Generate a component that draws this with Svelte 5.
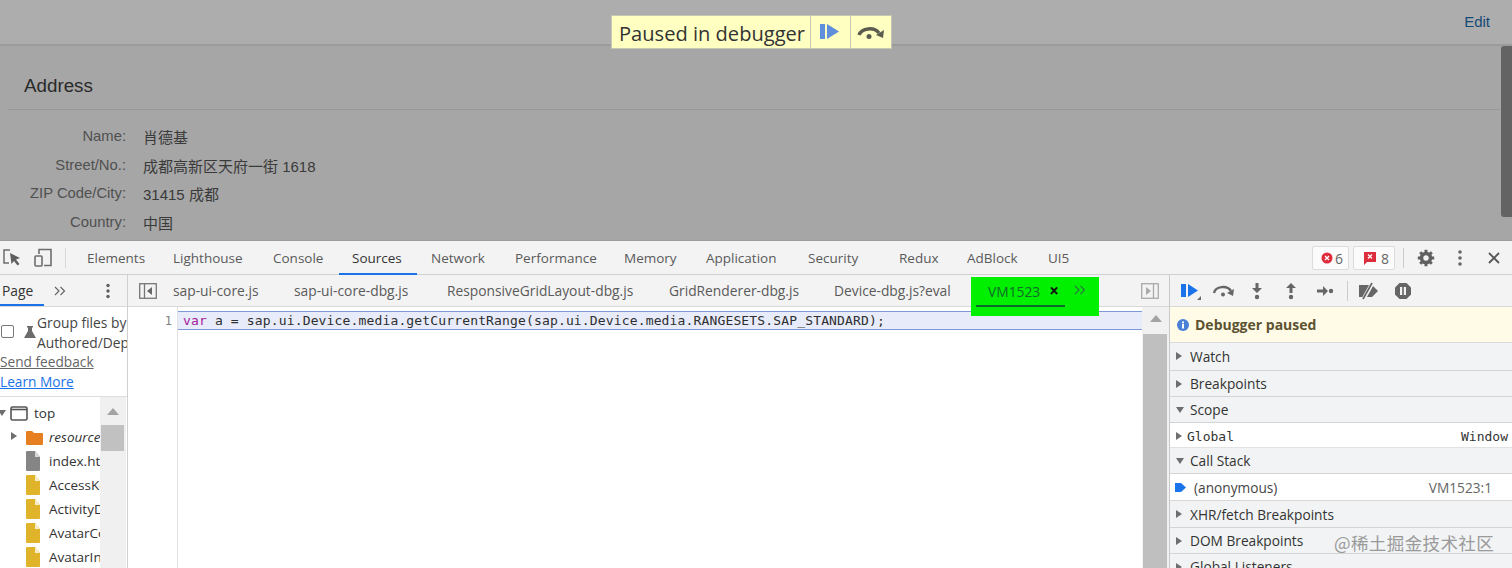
<script>
  const mainTabs = ['Elements','Lighthouse','Console','Sources','Network','Performance','Memory','Application','Security','Redux','AdBlock','UI5'];
  const fileTabs = ['sap-ui-core.js','sap-ui-core-dbg.js','ResponsiveGridLayout-dbg.js','GridRenderer-dbg.js','Device-dbg.js?eval'];
  const rows = [['Name:','肖德基'],['Street/No.:','成都高新区天府一街 1618'],['ZIP Code/City:','31415 成都'],['Country:','中国']];
  const files = [['AccessK'],['ActivityD'],['AvatarC'],['AvatarIn']];
</script>

<div class="root">
  <section class="page">
    <header class="pagehead">
      <div class="overlay">
        <span class="ovmsg">Paused in debugger</span>
        <span class="ovbtn"><svg width="24" height="20" viewBox="0 0 24 20"><rect x="2" y="2" width="5" height="15" fill="#5f8fdc"/><path d="M9 2l12 7.500L9 17z" fill="#5f8fdc"/></svg></span>
        <span class="ovbtn"><svg width="32" height="20" viewBox="0 0 32 20"><path d="M4 13a11 8.500 0 0 1 20-2" fill="none" stroke="#5b5b50" stroke-width="3.500"/><path d="M29 8l-1 8-7-3z" fill="#5b5b50"/><circle cx="14" cy="14.500" r="2.500" fill="#5b5b50"/></svg></span>
      </div>
      <a class="edit" href="#e">Edit</a>
    </header>
    <div class="pagebody">
      <h2>Address</h2>
      <div class="form">
        {#each rows as r}
          <div class="lab">{r[0]}</div><div class="val">{r[1]}</div>
        {/each}
      </div>
    </div>
    <div class="pagethumb"></div>
  </section>

  <section class="dt">
    <div class="toolbar">
      <div class="tool-left">
        <svg width="20" height="20" viewBox="0 0 20 20"><path d="M8 2H2v13h5" fill="none" stroke="#6e6e6e" stroke-width="1.500"/><path d="M8 5l10 5-4 1.500 3.500 4.500-2 1.500-3.500-4.500-2.500 3z" fill="#5f5f5f"/></svg>
        <svg width="20" height="20" viewBox="0 0 20 20"><path d="M6 6V1.500h12v16H11" fill="none" stroke="#6e6e6e" stroke-width="1.600"/><rect x="2" y="8" width="7" height="10" rx="1" fill="none" stroke="#6e6e6e" stroke-width="1.600"/></svg>
        <i class="leftsep"></i>
      </div>
      <nav class="maintabs">
        {#each mainTabs as t}<span class="tab" class:sel={t==='Sources'}>{t}</span>{/each}
      </nav>
      <div class="tool-right">
        <span class="badge"><svg width="12" height="12" viewBox="0 0 12 12"><circle cx="6" cy="6" r="5.500" fill="#dd2c3c"/><path d="M4 4l4 4M8 4l-4 4" stroke="#fff" stroke-width="1.300"/></svg>6</span>
        <span class="badge"><svg width="14" height="15" viewBox="0 0 14 15"><path d="M1 1h12v10H4l-3 3z" fill="#dd2c3c"/><path d="M5 3.500l4 4M9 3.500l-4 4" stroke="#fff" stroke-width="1.300"/></svg>8</span>
        <i class="vsep"></i>
        <svg class="gear" width="18" height="18" viewBox="0 0 18 18"><circle cx="9" cy="9" r="4.500" fill="none" stroke="#606060" stroke-width="3.600"/><path d="M9 .8v3M9 14.200v3M.8 9h3M14.200 9h3M3.200 3.200l2.100 2.100M12.700 12.700l2.100 2.100M14.800 3.200l-2.100 2.100M5.300 12.700l-2.100 2.100" stroke="#606060" stroke-width="3"/></svg>
        <svg class="dots" width="4" height="18" viewBox="0 0 4 18"><circle cx="2" cy="3" r="1.800" fill="#666"/><circle cx="2" cy="9" r="1.800" fill="#666"/><circle cx="2" cy="15" r="1.800" fill="#666"/></svg>
        <svg class="close" width="14" height="14" viewBox="0 0 14 14"><path d="M2 2l10 10M12 2L2 12" stroke="#555" stroke-width="1.800"/></svg>
      </div>
    </div>

    <div class="panes">
      <aside class="nav">
        <div class="navhead">
          <span class="pagetab">Page</span>
          <svg class="chev" width="12" height="10" viewBox="0 0 12 10"><path d="M1 1l4 4-4 4M6.500 1l4 4-4 4" fill="none" stroke="#666" stroke-width="1.200"/></svg>
          <svg class="navdots" width="4" height="16" viewBox="0 0 4 16"><circle cx="2" cy="2.500" r="1.700" fill="#5f5f5f"/><circle cx="2" cy="8" r="1.700" fill="#5f5f5f"/><circle cx="2" cy="13.500" r="1.700" fill="#5f5f5f"/></svg>
        </div>
        <div class="group">
          <div class="groupline">
            <span class="check"></span>
            <svg class="flask" width="14" height="14" viewBox="0 0 14 14"><path d="M4 1h6v1.500H9V6l4 7H1l4-7V2.500H4z" fill="#6c6c6c"/></svg>
            <span class="grouptext">Group files by<br>Authored/Deployed</span>
          </div>
          <a class="feedback" href="#f">Send feedback</a>
          <a class="learn" href="#l">Learn More</a>
        </div>
        <div class="treewrap">
          <div class="tree">
            <div class="trow top"><i class="tri down"></i><svg width="18" height="15" viewBox="0 0 18 15"><rect x="1" y="1" width="16" height="13" rx="1.500" fill="none" stroke="#555" stroke-width="1.600"/><path d="M1 3.500h16" stroke="#555" stroke-width="1.600"/></svg><span>top</span></div>
            <div class="trow sub"><i class="tri right"></i><svg width="17" height="15" viewBox="0 0 17 15"><path d="M0 2a1 1 0 0 1 1-1h5l2 2h8a1 1 0 0 1 1 1v10a1 1 0 0 1-1 1H1a1 1 0 0 1-1-1z" fill="#e67e22"/></svg><span class="em">resources</span></div>
            <div class="trow file"><svg width="15" height="20" viewBox="0 0 15 20"><path d="M1 0h8l5 6v13a1 1 0 0 1-1 1H1a1 1 0 0 1-1-1V1a1 1 0 0 1 1-1z" fill="#858585"/><path d="M9 0l5 6H9z" fill="#d8d8d8"/></svg><span>index.html</span></div>
            {#each files as f}
              <div class="trow file"><svg width="15" height="20" viewBox="0 0 15 20"><path d="M1 0h8l5 6v13a1 1 0 0 1-1 1H1a1 1 0 0 1-1-1V1a1 1 0 0 1 1-1z" fill="#e0b42a"/><path d="M9 0l5 6H9z" fill="#f6ecc8"/></svg><span>{f[0]}ontroller.js</span></div>
            {/each}
          </div>
          <div class="treescroll"><i class="up"></i><div class="treethumb"></div></div>
        </div>
      </aside>

      <main class="editor">
        <div class="filetabs">
          <svg class="toggle" width="18" height="16" viewBox="0 0 18 16"><rect x=".7" y=".7" width="16.600" height="14.600" fill="none" stroke="#777" stroke-width="1.300"/><path d="M5.500 1v14" stroke="#777" stroke-width="1.300"/><path d="M13 4v8L8 8z" fill="#666"/></svg>
          <div class="ftabs">
            {#each fileTabs as t}<span class="ftab">{t}</span>{/each}
          </div>
          <div class="hl">
            <div class="hltab"><span>VM1523</span><b>×</b></div>
            <svg class="hlchev" width="12" height="10" viewBox="0 0 12 10"><path d="M1 1l4 4-4 4M6.500 1l4 4-4 4" fill="none" stroke="#2a7a3e" stroke-width="1.200"/></svg>
          </div>
          <svg class="toggle2" width="18" height="16" viewBox="0 0 18 16"><rect x=".7" y=".7" width="16.600" height="14.600" fill="none" stroke="#aaa" stroke-width="1.300"/><path d="M12.500 1v14" stroke="#aaa" stroke-width="1.300"/><path d="M5 4v8l5-4z" fill="#aaa"/></svg>
        </div>
        <div class="code">
          <div class="gutter">1</div>
          <div class="codebody">
            <div class="line"><span class="kw">var</span> a = sap.ui.Device.media.getCurrentRange(sap.ui.Device.media.RANGESETS.SAP_STANDARD);</div>
          </div>
          <div class="codescroll"><i class="up"></i><div class="codethumb"></div></div>
        </div>
      </main>

      <aside class="side">
        <div class="dbgbar">
          <span class="ic resume"><svg width="22" height="18" viewBox="0 0 22 18"><rect x="1" y="2" width="5" height="13" fill="#1a73e8"/><path d="M8 2l10 6.500L8 15z" fill="#1a73e8"/><path d="M21 14v4h-4z" fill="#666"/></svg></span>
          <span class="ic"><svg width="24" height="14" viewBox="0 0 24 14"><path d="M2 9a9 7 0 0 1 17-2" fill="none" stroke="#666" stroke-width="2.400"/><path d="M22 5l-1 7-6-3z" fill="#666"/><circle cx="11" cy="10.500" r="2" fill="#666"/></svg></span>
          <span class="ic"><svg width="12" height="18" viewBox="0 0 12 18"><path d="M4.500 1h3v5H11l-5 5-5-5h3.500z" fill="#666"/><circle cx="6" cy="15" r="2.200" fill="#666"/></svg></span>
          <span class="ic"><svg width="12" height="18" viewBox="0 0 12 18"><path d="M4.500 11h3V6H11L6 1 1 6h3.500z" fill="#666"/><circle cx="6" cy="15" r="2.200" fill="#666"/></svg></span>
          <span class="ic"><svg width="18" height="12" viewBox="0 0 18 12"><path d="M1 4.500h6V1l5 5-5 5V7.500H1z" fill="#666"/><circle cx="15" cy="6" r="2.200" fill="#666"/></svg></span>
          <i class="vsep2"></i>
          <span class="ic"><svg width="22" height="18" viewBox="0 0 22 18"><path d="M1 3h13l6 6-6 6H1z" fill="#666"/><path d="M15 0L5 18" stroke="#f3f3f3" stroke-width="4"/><path d="M14 1L5 17" stroke="#666" stroke-width="1.700"/></svg></span>
          <span class="ic"><svg width="18" height="18" viewBox="0 0 18 18"><path d="M5.500 1h7L17 5.500v7L12.500 17h-7L1 12.500v-7z" fill="#666"/><rect x="6" y="5" width="2.200" height="8" fill="#f3f3f3"/><rect x="9.800" y="5" width="2.200" height="8" fill="#f3f3f3"/></svg></span>
        </div>
        <div class="paused">
          <svg width="12" height="12" viewBox="0 0 12 12"><circle cx="6" cy="6" r="6" fill="#4a80d8"/><rect x="5" y="5" width="2" height="4.500" fill="#fff"/><rect x="5" y="2.500" width="2" height="1.800" fill="#fff"/></svg>
          <span>Debugger paused</span>
        </div>
        <div class="sec h28"><i class="tri right"></i>Watch</div>
        <div class="sec h26"><i class="tri right"></i>Breakpoints</div>
        <div class="sec h26"><i class="tri down"></i>Scope</div>
        <div class="scope"><i class="tri right"></i><span>Global</span><span class="win">Window</span></div>
        <div class="sec h26"><i class="tri down"></i>Call Stack</div>
        <div class="frame"><svg width="11" height="11" viewBox="0 0 11 11"><path d="M0 1h6l5 4.500L6 10H0z" fill="#1a73e8"/></svg><span class="fn">(anonymous)</span><span class="loc">VM1523:1</span></div>
        <div class="sec h27"><i class="tri right"></i>XHR/fetch Breakpoints</div>
        <div class="sec h26"><i class="tri right"></i>DOM Breakpoints<span class="mark">@稀土掘金技术社区</span></div>
        <div class="sec h26"><i class="tri right"></i>Global Listeners</div>
      </aside>
    </div>
  </section>
</div>

<style>
  :global(body) { margin: 0; background: #fff; }
  .root { width: 1512px; height: 568px; overflow: hidden; font-family: "Open Sans", "Noto Sans CJK SC", sans-serif; }
  svg { display: block; flex: none; }
  i { display: block; }

  .page { position: relative; height: 241px; background: #a6a6a6; border-bottom: 1px solid #9c9c9c; box-sizing: border-box; font-family: "Liberation Sans", "Noto Sans CJK SC", sans-serif; overflow: hidden; }
  .pagehead { height: 44px; background: #adadad; border-bottom: 2px solid #9b9b9b; display: flex; justify-content: center; box-sizing: content-box; position: relative; }
  .overlay { position: absolute; left: 611px; top: 15px; height: 34px; width: 281px; box-sizing: border-box; display: flex; background: #ffffc2; border: 1px solid #c6c6b4; z-index: 2; }
  .ovmsg { width: 200px; box-sizing: border-box; padding-left: 7px; font: 20.100px/36px "Open Sans", sans-serif; color: #333; border-right: 1px solid #c6c6b4; white-space: nowrap; }
  .ovbtn { display: flex; align-items: center; justify-content: center; border-right: 1px solid #c6c6b4; width: 40px; }
  .ovbtn:last-child { border-right: 0; }
  .edit { position: absolute; right: 22px; top: 13px; font-size: 15px; color: #134a77; text-decoration: none; }
  .pagebody { margin-left: 8px; margin-right: 12px; }
  h2 { margin: 0; padding: 27px 0 11px 16px; height: 25px; font-size: 18.800px; line-height: 25px; font-weight: 400; color: #2a2a2a; border-bottom: 1px solid #979797; box-sizing: content-box; }
  .form { display: grid; grid-template-columns: 118px 1fr; column-gap: 17px; grid-auto-rows: 28.600px; margin-top: 13px; }
  .lab { text-align: right; font-size: 14.800px; line-height: 28px; color: #505050; margin-top: -1px; }
  .val { font-size: 15px; line-height: 28px; color: #3a3a3a; margin-top: 1px; }
  .pagethumb { position: absolute; top: 46px; height: 171px; right: 0; width: 11px; border-radius: 3px 0 0 3px; background: #636363; }

  .dt { height: 327px; background: #fff; display: flex; flex-direction: column; color: #444; font-size: 13px; }
  .toolbar { height: 33px; background: #f3f3f3; border-bottom: 1px solid #d0d0d0; display: flex; box-sizing: content-box; position: relative; }
  .tool-left { width: 67px; margin-right: 20px; display: flex; gap: 11px; padding-left: 2px; padding-top: 7px; box-sizing: border-box; position: relative; }
  .leftsep { position: absolute; left: 65px; top: 7px; width: 1px; height: 20px; background: #d8d8d8; }
  .maintabs { display: grid; grid-template-columns: 86px 100px 79px 79px 84px 109px 82px 102px 91px 68px 81px 40px; align-items: center; height: 33px; position: relative; }
  .tab { font-size: 13.500px; line-height: 35px; color: #5a5a5a; white-space: nowrap; position: relative; }
  .tab.sel { color: #333; }
  .tab.sel::after { content: ""; position: absolute; left: -13px; width: 78px; bottom: 1px; height: 2px; background: #1a73e8; }
  .tool-right { position: absolute; left: 1312px; top: 5px; display: flex; align-items: center; height: 24px; }
  .badge { display: flex; align-items: center; gap: 2px; height: 24px; width: 37px; box-sizing: border-box; padding-left: 8px; margin-right: 4px; border: 1px solid #dcdcdc; border-radius: 2px; background: #fbfbfb; color: #666; font-size: 14px; }
  .badge + .badge { width: 42px; padding-left: 9px; margin-right: 8px; gap: 4px; }
  .vsep { width: 1px; height: 20px; background: #ccc; margin-right: 13px; }
  .gear { margin-right: 23px; }
  .dots { margin-right: 25px; }

  .panes { flex: 1; display: flex; min-height: 0; }
  .nav { width: 127px; flex: none; border-right: 1px solid #d0d0d0; background: #fff; display: flex; flex-direction: column; overflow: hidden; }
  .navhead { height: 31px; flex: none; background: #f3f3f3; display: flex; position: relative; border-bottom: 1px solid #d8d8d8; box-sizing: content-box; }
  .pagetab { width: 44px; height: 31px; box-sizing: border-box; padding-left: 2px; line-height: 32px; font-size: 13.800px; color: #333; border-bottom: 2px solid #1a73e8; }
  .chev { position: absolute; left: 54px; top: 11px; }
  .navdots { position: absolute; left: 106px; top: 8px; }
  .group { height: 91px; flex: none; border-bottom: 1px solid #ddd; box-sizing: border-box; margin-top: -1px; padding-top: 9px; white-space: nowrap; overflow: hidden; }
  .groupline { display: flex; height: 37px; position: relative; }
  .check { width: 11px; height: 11px; border: 1px solid #777; border-radius: 2px; margin: 10px 0 0 1px; flex: none; }
  .flask { margin: 10px 0 0 9px; }
  .grouptext { position: absolute; left: 37px; top: -2px; line-height: 20px; color: #444; font-size: 13.800px; }
  .feedback, .learn { display: block; font-size: 13.700px; line-height: 20px; color: #666; }
  .learn { color: #1a73e8; }
  .treewrap { flex: 1; display: flex; min-height: 0; overflow: hidden; }
  .tree { width: 100px; flex: none; overflow: hidden; padding-top: 4px; }
  .trow { height: 24px; display: flex; align-items: center; white-space: nowrap; font-size: 13.500px; color: #333; position: relative; }
  .trow.top svg { margin-left: 10px; margin-right: 6px; }
  .trow.top .tri { position: absolute; left: -2px; top: 9px; }
  .trow.sub { padding-left: 26px; }
  .trow.sub .tri { position: absolute; left: 11px; top: 7px; }
  .trow.sub svg { margin-right: 6px; }
  .trow.file { padding-left: 26px; }
  .trow.file svg { margin-right: 8px; }
  .em { font-style: italic; }
  .tri.right { width: 0; height: 0; border-left: 6px solid #6e6e6e; border-top: 4.500px solid transparent; border-bottom: 4.500px solid transparent; }
  .tri.down { width: 0; height: 0; border-top: 6px solid #6e6e6e; border-left: 4.500px solid transparent; border-right: 4.500px solid transparent; }
  .treescroll { width: 26px; background: #f0f0f0; position: relative; flex: none; }
  .treescroll .up { position: absolute; left: 7px; top: 11px; width: 0; height: 0; border-bottom: 7px solid #a3a3a3; border-left: 6px solid transparent; border-right: 6px solid transparent; }
  .treethumb { position: absolute; left: 1px; right: 2px; top: 28px; height: 26px; background: #c1c1c1; }

  .editor { flex: 1; min-width: 0; display: flex; flex-direction: column; }
  .filetabs { height: 31px; flex: none; background: #f3f3f3; border-bottom: 1px solid #d8d8d8; position: relative; display: flex; box-sizing: content-box; }
  .toggle { position: absolute; left: 11px; top: 8px; }
  .toggle2 { position: absolute; left: 1013px; top: 8px; }
  .ftabs { display: grid; grid-template-columns: 121px 153px 222px 165px 138px; padding-left: 45px; align-items: center; height: 31px; }
  .ftab { font-size: 13.800px; color: #5a5a5a; white-space: nowrap; line-height: 32px; }
  .hl { position: absolute; left: 843px; top: 2px; width: 128px; height: 39px; background: #00f000; z-index: 2; }
  .hltab { position: absolute; left: 5px; top: 0; width: 89px; height: 30px; box-sizing: border-box; border-bottom: 2px solid #0a6a28; padding-left: 12px; display: flex; align-items: center; color: #126b2c; font-size: 13.800px; }
  .hltab b { margin-left: 9px; font-size: 17px; color: #111; font-weight: 700; line-height: 28px; }
  .hlchev { position: absolute; left: 103px; top: 8px; }

  .code { flex: 1; display: flex; min-height: 0; background: #fff; }
  .gutter { width: 44px; flex: none; border-right: 1px solid #e3e3e3; box-sizing: border-box; padding: 4px 5px 0 0; text-align: right; font: 12px/20px "DejaVu Sans Mono", monospace; color: #808080; height: 100%; margin-left: 6px; }
  .codebody { flex: 1; min-width: 0; }
  .line { height: 17px; margin-top: 4px; background: #e8ecfa; border-top: 1px solid #7d9ad8; border-bottom: 1px solid #7d9ad8; box-sizing: content-box; padding-left: 5px; font: 13px/18px "DejaVu Sans Mono", monospace; letter-spacing: .15px; color: #2e2e2e; white-space: pre; }
  .kw { color: #a6219a; }
  .codescroll { width: 27px; flex: none; background: #f1f1f1; position: relative; }
  .codescroll .up { position: absolute; left: 8px; top: 8px; width: 0; height: 0; border-bottom: 7px solid #a3a3a3; border-left: 6px solid transparent; border-right: 6px solid transparent; }
  .codethumb { position: absolute; left: 1px; right: 2px; top: 27px; bottom: 0; background: #bfbfbf; }

  .side { width: 343px; flex: none; border-left: 1px solid #c9c9c9; box-sizing: border-box; background: #f3f3f3; overflow: hidden; }
  .dbgbar { height: 31px; display: flex; align-items: center; border-bottom: 1px solid #d8d8d8; padding-left: 8px; box-sizing: content-box; }
  .ic { width: 34px; display: flex; justify-content: center; }
  .ic.resume { width: 26px; }
  .ic.resume + .ic { margin-left: 3px; margin-right: -1px; }
  .vsep2 { width: 1px; height: 20px; background: #ccc; margin: 0 4px 0 5px; }
  .paused { height: 36px; background: #fffbe6; display: flex; align-items: center; padding-left: 7px; gap: 6px; font-weight: 700; font-size: 14px; color: #5c5231; border-bottom: 1px solid #dadada; box-sizing: border-box; }
  .sec { display: flex; align-items: center; gap: 8px; padding-left: 6px; font-size: 13.700px; color: #333; border-bottom: 1px solid #d4d4d4; box-sizing: border-box; position: relative; background: #f1f3f4; white-space: nowrap; }
  .sec .tri.down { margin-right: -2px; }
  .h28 { height: 28px; padding-bottom: 1px; }
  .h27 { height: 27px; }
  .h26 { height: 26px; }
  .scope { height: 25px; padding: 2px 4px 0 6px; background: #fff; display: flex; align-items: center; gap: 5px; font: 13px "DejaVu Sans Mono", monospace; color: #333; border-bottom: 1px solid #e2e2e2; box-sizing: border-box; }
  .win { margin-left: auto; }
  .frame { height: 27px; background: #fff; display: flex; align-items: center; padding-left: 5px; font-size: 13.700px; color: #444; border-bottom: 1px solid #d8d8d8; box-sizing: border-box; }
  .fn { margin-left: 8px; }
  .loc { margin-left: auto; margin-right: 20px; color: #666; }
  .mark { position: absolute; left: 164px; top: 2px; font-size: 17.500px; color: #9a9a9a; letter-spacing: .4px; font-family: "Noto Sans CJK SC", sans-serif; }
</style>
